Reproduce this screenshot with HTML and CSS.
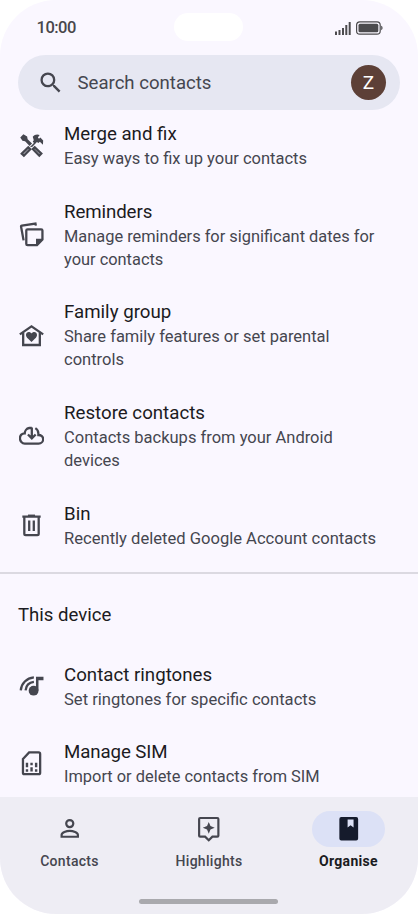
FILE: index.html
```html
<!DOCTYPE html>
<html lang="en">
<head>
<meta charset="utf-8">
<title>Contacts</title>
<link rel="stylesheet" href="styles.css">
</head>
<body>
<div class="phone">
  <header class="status">
    <span class="time">10:00</span>
    <span class="island"></span>
    <svg class="indicators" viewBox="0 0 48 14" width="48" height="14">
      <path d="M0 10.500h2V14H0zM3.500 9h2v5h-2zM7 7h2v7H7zM10.300 4h2v10h-2zM13.700 1h2v13h-2z"/>
      <rect class="cell" x="21.600" y=".9" width="23.600" height="12.200" rx="3.200"/>
      <rect x="23.500" y="2.800" width="19.800" height="8.400" rx="1.500"/>
      <path d="M46.200 4.800c1.800.5 1.800 3.900 0 4.400z"/>
    </svg>
  </header>
  <div class="search">
    <svg class="icon" viewBox="0 0 24 24"><path d="M15.500 14h-.79l-.28-.27A6.470 6.470 0 0 0 16 9.500 6.500 6.500 0 1 0 9.500 16c1.610 0 3.090-.59 4.230-1.570l.27.28v.79l5 4.990L20.490 19zm-6 0a4.500 4.500 0 1 1 0-9 4.500 4.500 0 0 1 0 9z"/></svg>
    <span class="placeholder">Search contacts</span>
    <span class="avatar">Z</span>
  </div>
  <main class="content">
    <ul class="list">
      <li class="item">
        <svg class="icon" viewBox="0 0 24 24"><path d="M1.200 4.200 4.200 1.200l3.600 2.200.5 2.500 4.200 4.200-2.300 2.300L5.800 8l-2.500-.5zM10.300 13.600l4-4.100-1.100-1.300 1-1.200-1-3.500c1.900-2.200 4.500-2.600 6.600-1.500l-1.700 2.200 1.100 1.200 1.300-1 2.700 2.700-.2 4.100-3-2.800-1.400 1.300-1.400-1-4.300 4.600z"/><path class="line bold" d="m2.700 19.800 6.200-6 1.800 1.800-6 6.100zM15.100 13.800l6.300 6-1.900 1.900-6.200-6.200z"/></svg>
        <div class="text"><h3>Merge and fix</h3><p>Easy ways to fix up your contacts</p></div>
      </li>
      <li class="item">
        <svg class="icon" viewBox="0 0 24 24"><path class="line bold" d="M4.400 17.600 2 4.600q-.2-1 .8-1.200l13-1.900.4 2"/><path class="line bold" d="M8.200 7h13.100q1.200 0 1.200 1.200v8.700l-5.200 5.300H8.200Q7 22.200 7 21V8.200Q7 7 8.200 7z"/><path d="M16.300 23v-7h7z"/></svg>
        <div class="text"><h3 class="tight">Reminders</h3><p class="snug">Manage reminders for significant dates for<br>your contacts</p></div>
      </li>
      <li class="item">
        <svg class="icon" viewBox="0 0 24 24"><path class="line bold" d="M.8 10.900 12 3.200l11.200 7.700M4 9v12.100h16V9"/><path d="m12 18.300-1-1c-3-2.700-4.300-3.800-4.300-5.700 0-3.200 3.600-4 5.300-1.500 1.700-2.500 5.300-1.700 5.300 1.500 0 1.900-1.300 3-4.300 5.700z"/></svg>
        <div class="text"><h3>Family group</h3><p>Share family features or set parental<br>controls</p></div>
      </li>
      <li class="item">
        <svg class="icon" viewBox="0 0 24 24"><path class="line bold" d="M12.300 4.200v10M8.600 11l3.700 3.700L16 11M12.300 4.800H9.800C7 5.200 5.500 8 5.500 10c-2.600 0-4.600 1.700-4.600 4.600C.9 17.400 3 19.700 5.500 19.700h13.300c2.500 0 4.400-1.800 4.400-4.200 0-2.300-1.900-4-4.600-4V10c0-2-1-3.900-2.900-5.100"/></svg>
        <div class="text"><h3>Restore contacts</h3><p>Contacts backups from your Android<br>devices</p></div>
      </li>
      <li class="item">
        <svg class="icon" viewBox="0 0 24 24"><path class="line bold" d="M3.200 3.500h17.600M5.100 3.500v16.400q0 1.300 1.300 1.300h11.200q1.300 0 1.300-1.300V3.500M9.800 7.200v10M14.200 7.200v10"/><path d="M8.600 1.500h6.800v2H8.600z"/></svg>
        <div class="text"><h3>Bin</h3><p class="wide">Recently deleted Google Account contacts</p></div>
      </li>
    </ul>
    <hr class="divider">
    <h2 class="section">This device</h2>
    <ul class="list">
      <li class="item">
        <svg class="icon" viewBox="0 0 24 24"><path class="line bold" d="M1.700 16.600C2.300 9.900 7.300 4.900 14.300 4.300M6.300 16.600c.5-4.300 3.500-7.500 8-8"/><circle cx="14" cy="17" r="4.700"/><path d="M16.300 17V3.500h7.200V7h-4.800v10z"/></svg>
        <div class="text"><h3>Contact ringtones</h3><p class="wide">Set ringtones for specific contacts</p></div>
      </li>
      <li class="item">
        <svg class="icon" viewBox="0 0 24 24"><path class="line bold" d="M3.800 7.600 9.700 1.400h9.200q1.400 0 1.400 1.400v18q0 1.400-1.400 1.400H5.200q-1.400 0-1.400-1.400z"/><path d="M6.500 11.300h2.300v4.400H6.500zm0 6.300h2.300v2.200H6.500zm4.400-6.300h2.300v2.300h-2.300zm0 4.200h2.300v4.300h-2.300zm4.400-4.200h2.300v4.400h-2.300zm0 6.300h2.300v2.200h-2.300z"/></svg>
        <div class="text"><h3 class="tight">Manage SIM</h3><p class="snug">Import or delete contacts from SIM</p></div>
      </li>
    </ul>
  </main>
  <nav class="nav">
    <a class="tab">
      <span class="pill"><svg class="icon" viewBox="0 0 24 24"><circle class="line" cx="12" cy="7.500" r="3.100"/><path class="line" d="M4.900 19v-1.700c0-2 4.100-3.500 7.100-3.500s7.100 1.500 7.100 3.500V19z"/></svg></span>
      <span class="label">Contacts</span>
    </a>
    <a class="tab">
      <span class="pill"><svg class="icon" viewBox="0 0 24 24"><path class="line" d="M4.500 2.600h15q.9 0 .9.900v14.500q0 .9-.9.900h-4.300L12 22.100l-3.200-3.200H4.500q-.9 0-.9-.9V3.500q0-.9.900-.9z"/><path d="m12 6 1.500 3.700 3.700 1.500-3.700 1.500L12 16.400l-1.500-3.700-3.700-1.500 3.700-1.500z"/></svg></span>
      <span class="label">Highlights</span>
    </a>
    <a class="tab active">
      <span class="pill"><svg class="icon" viewBox="0 0 24 24"><path fill-rule="evenodd" d="M5.500 1.800h13q1.700 0 1.700 1.700v17q0 1.700-1.700 1.700h-13q-1.700 0-1.700-1.700v-17q0-1.700 1.700-1.700zM11 4v7l2.600-2.100L16.200 11V4z"/></svg></span>
      <span class="label">Organise</span>
    </a>
  </nav>
  <div class="home"><span class="handle"></span></div>
</div>
</body>
</html>
```
FILE: styles.css
```css
* { box-sizing: border-box; margin: 0; padding: 0; }
body { background: #fff; font-family: Roboto, "Liberation Sans", sans-serif; color: #1c1b22; }
.phone { width: 418px; height: 914px; border-radius: 56px; overflow: hidden; background: #faf7ff; display: flex; flex-direction: column; }
.status { height: 55px; flex: none; display: grid; grid-template-columns: 1fr 69px 1fr; align-items: center; padding: 0 35.500px 0 36.500px; }
.time { font-size: 16.500px; font-weight: 500; color: #48474b; letter-spacing: -.5px; }
.island { height: 28px; border-radius: 14px; background: #fff; margin: -1px 1.500px 0 -1.500px; }
.indicators { justify-self: end; fill: #4c4b4e; }
.cell { fill: none; stroke: #4c4b4e; stroke-width: 1.200; }
.search { height: 55px; flex: none; margin: 0 18px; padding: 0 14px 0 18.500px; border-radius: 28px; background: #e6e7f2; display: flex; align-items: center; }
.icon { width: 27.500px; height: 27.500px; flex: none; fill: #45464f; display: block; }
.item .icon { width: 25px; height: 25px; }
.line { fill: none; stroke: #45464f; stroke-width: 1.900; }
.bold { stroke-width: 2.200; }
.placeholder { margin-left: 13.500px; font-size: 18.600px; color: #45464f; flex: 1; white-space: nowrap; }
.avatar { width: 35px; height: 35px; border-radius: 50%; background: #5d4037; color: #fff; font-size: 19px; display: grid; place-items: center; }
.content { flex: 1; min-height: 0; overflow: hidden; margin-top: -3.600px; }
.list { list-style: none; }
.item { display: flex; align-items: center; gap: 20px; padding: 13.600px 19px; }
.text { white-space: nowrap; }
h3 { font-size: 18.700px; font-weight: 400; line-height: 28px; }
.text p { font-size: 16.500px; line-height: 22.700px; color: #45464f; }
.tight { letter-spacing: -.1px; }
.text .snug { font-size: 16.400px; }
.text .wide { font-size: 16.580px; }
.divider { border: 0; height: 2px; background: #dbd9e1; margin-top: 8px; }
.section { font-size: 18.600px; font-weight: 400; line-height: 28px; padding: 27px 18px 18px; }
.nav { height: 84px; flex: none; background: #eeedf4; display: flex; justify-content: space-between; padding: 14px 33px 0; }
.tab { width: 73px; display: flex; flex-direction: column; align-items: center; }
.pill { width: 73px; height: 36px; border-radius: 18px; display: grid; place-items: center; }
.label { font-size: 14px; font-weight: 500; line-height: 20px; margin-top: 4px; letter-spacing: .3px; color: #45464f; white-space: nowrap; }
.active .pill { background: #dce1f6; }
.active .icon { fill: #151b2c; }
.active .label { color: #1a1b21; font-weight: 700; }
.home { height: 33px; flex: none; background: #eeedf4; display: flex; justify-content: center; align-items: flex-start; padding: 18px 1px 0 0; }
.handle { width: 139px; height: 5px; border-radius: 3px; background: #a9a9ad; }
```
